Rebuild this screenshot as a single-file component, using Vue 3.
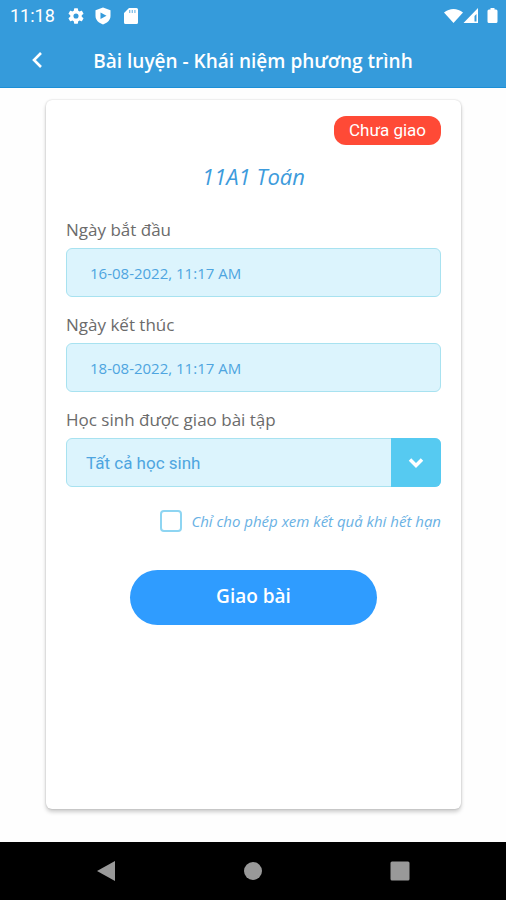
<script setup>
import { ref } from 'vue'

const startDate = ref('16-08-2022, 11:17 AM')
const endDate = ref('18-08-2022, 11:17 AM')
const students = ref('all')
const hideUntilExpired = ref(false)
</script>

<template>
  <div class="screen">
    <header class="top">
      <div class="status">
        <span class="clock">11:18</span>
        <svg class="gear" viewBox="2 2 20 20" width="16" height="16" aria-hidden="true">
          <path fill="#fff" d="M19.14 12.94c.04-.3.06-.61.06-.94 0-.32-.02-.64-.07-.94l2.03-1.58a.49.49 0 0 0 .12-.61l-1.92-3.32a.49.49 0 0 0-.59-.22l-2.39.96a7 7 0 0 0-1.62-.94l-.36-2.54A.48.48 0 0 0 13.92 2.400h-3.840a.48.48 0 0 0-.47.41l-.36 2.540a7.200 7.200 0 0 0-1.620.94l-2.390-.96a.48.48 0 0 0-.59.22L2.740 8.870a.47.47 0 0 0 .12.61l2.030 1.580c-.05.3-.09.63-.09.94s.02.64.07.94l-2.030 1.580a.49.49 0 0 0-.12.61l1.920 3.320c.12.22.37.29.59.22l2.390-.96c.5.38 1.030.7 1.620.94l.36 2.540c.05.24.24.41.48.41h3.840c.24 0 .44-.17.47-.41l.36-2.540a7 7 0 0 0 1.620-.94l2.390.96c.22.08.47 0 .59-.22l1.920-3.320a.47.47 0 0 0-.12-.61zM12 15.200a3.200 3.200 0 1 1 0-6.400 3.200 3.200 0 0 1 0 6.400z" />
        </svg>
        <svg class="shield" viewBox="0 0 16 18" width="16" height="18" aria-hidden="true">
          <path fill="#fff" d="M8 .5l7.500 2.800V9c0 4-3.200 7-7.500 8.500C3.700 16 .5 13 .5 9V3.300z" />
          <path fill="#359bdb" d="M5.500 5.500v6.400L11.500 8.700z" />
        </svg>
        <svg class="card-icon" viewBox="0 0 14 16" width="14" height="16" aria-hidden="true">
          <path fill="#fff" d="M5 0h7.500A1.500 1.500 0 0 1 14 1.500v13a1.500 1.500 0 0 1-1.500 1.500h-11A1.500 1.500 0 0 1 0 14.500V5z" />
          <path stroke="#7fbfe9" stroke-width="1.300" d="M5.700 2v3M8.300 2v3M10.900 2v3" />
        </svg>
        <svg class="signals" viewBox="0 0 56 18" width="56" height="18" aria-hidden="true">
          <path fill="#fff" d="M0 5.500C5.500.8 13.500.8 19 5.500L9.500 16z" />
          <path fill="#fff" fill-rule="evenodd" d="M34 1v15H19.500zM32.500 7v7.500h-2V9z" />
          <path fill="#fff" d="M46.500 1h4v1.500H52a1.500 1.500 0 0 1 1.500 1.500v10.500A1.500 1.500 0 0 1 52 16h-7a1.500 1.500 0 0 1-1.500-1.500V4A1.500 1.500 0 0 1 45 2.500h1.500z" />
        </svg>
      </div>
      <div class="bar">
        <button class="back" type="button" aria-label="Quay lại">
          <svg viewBox="0 0 12 18" width="12" height="18" aria-hidden="true">
            <path d="M10 2L3 9l7 7" fill="none" stroke="#fff" stroke-width="2.600" />
          </svg>
        </button>
        <h1>Bài luyện - Khái niệm phương trình</h1>
      </div>
    </header>

    <main>
      <form class="card" @submit.prevent>
        <span class="badge">Chưa giao</span>
        <h2>11A1 Toán</h2>

        <label for="start">Ngày bắt đầu</label>
        <input id="start" v-model="startDate" class="field" type="text" />

        <label for="end">Ngày kết thúc</label>
        <input id="end" v-model="endDate" class="field" type="text" />

        <label for="students">Học sinh được giao bài tập</label>
        <div class="picker">
          <select id="students" v-model="students" class="field">
            <option value="all">Tất cả học sinh</option>
          </select>
          <span class="arrow">
            <svg viewBox="0 0 16 12" width="16" height="12" aria-hidden="true">
              <path d="M2 2.500l6 6 6-6" fill="none" stroke="#fff" stroke-width="3.500" />
            </svg>
          </span>
        </div>

        <div class="option">
          <input id="hide" v-model="hideUntilExpired" type="checkbox" />
          <label for="hide">Chỉ cho phép xem kết quả khi hết hạn</label>
        </div>

        <button class="submit" type="submit">Giao bài</button>
      </form>
    </main>

    <nav>
      <button type="button" aria-label="Trở về">
        <svg viewBox="0 0 20 22" width="20" height="22"><path fill="#999" d="M19 1v20L1 11z" /></svg>
      </button>
      <button type="button" aria-label="Màn hình chính">
        <svg viewBox="0 0 20 20" width="20" height="20"><circle cx="10" cy="10" r="9" fill="#999" /></svg>
      </button>
      <button type="button" aria-label="Ứng dụng gần đây">
        <svg viewBox="0 0 20 20" width="20" height="20"><rect width="19" height="19" x=".5" y=".5" rx="1.500" fill="#999" /></svg>
      </button>
    </nav>
  </div>
</template>

<style>
body {
  margin: 0;
  background: #fefefe;
}
</style>

<style scoped>
.screen {
  display: flex;
  flex-direction: column;
  min-height: 100vh;
  font-family: "Open Sans", "Noto Sans", sans-serif;
  color: #6b6b6b;
}

.screen * {
  box-sizing: border-box;
}

button {
  padding: 0;
  border: 0;
  background: none;
  font-family: inherit;
  cursor: pointer;
}

svg {
  display: block;
}

.top {
  background: #359bdb;
  color: #fff;
  box-shadow: inset 0 -1px #1c8fd6;
}

.status {
  display: flex;
  align-items: center;
  height: 32px;
  padding: 0 6px 0 10px;
}

.clock {
  font: 18px/32px Roboto, sans-serif;
  margin-right: 13px;
}

.shield {
  margin-left: 11px;
}

.card-icon {
  margin-left: 13px;
}

.signals {
  margin-left: auto;
}

.bar {
  display: grid;
  grid-template-columns: 73px 1fr 73px;
  align-items: center;
  height: 56px;
}

.back {
  display: grid;
  place-items: center;
  height: 48px;
}

h1 {
  margin: 0;
  padding-top: 2px;
  font-size: 19px;
  font-weight: 600;
  line-height: 28px;
  text-align: center;
  white-space: nowrap;
}

main {
  display: flex;
  flex: 1;
  padding: 12px 45px 33px 46px;
}

.card {
  display: flex;
  flex: 1;
  flex-direction: column;
  min-width: 0;
  padding: 16px 20px;
  border-radius: 6px;
  background: #fff;
  box-shadow: 0 0 2px rgba(0, 0, 0, 0.2), 0 3px 4px rgba(0, 0, 0, 0.2);
}

.badge {
  align-self: flex-end;
  padding: 0 15px;
  border-radius: 12px;
  background: #ff4a36;
  color: #fff;
  font: 17px/29px Roboto, sans-serif;
}

h2 {
  margin: 16px 0 27px;
  color: #3d9bdc;
  font-size: 22px;
  font-style: italic;
  font-weight: 400;
  line-height: 30px;
  text-align: center;
}

.card > label {
  margin-bottom: 6px;
  font-size: 17px;
  font-weight: 500;
  line-height: 24px;
}

.field {
  width: 100%;
  height: 49px;
  margin: 0 0 16px;
  padding: 0 23px;
  border: 1px solid #a8e2f0;
  border-radius: 6px;
  background: #dcf4fd;
  color: #4ea5e0;
  font-family: inherit;
  font-size: 15px;
}

.picker {
  display: grid;
  grid-template-columns: 1fr 50px;
}

.picker .field {
  grid-area: 1 / 1 / 2 / 3;
  margin: 0;
  padding: 0 60px 0 19px;
  appearance: none;
  font-family: Roboto, sans-serif;
  font-size: 17px;
}

.arrow {
  display: grid;
  grid-area: 1 / 2;
  place-items: center;
  border-radius: 0 6px 6px 0;
  background: #56caf1;
  pointer-events: none;
}

.option {
  display: flex;
  align-items: center;
  justify-content: flex-end;
  gap: 9px;
  margin-top: 22px;
  color: #69b1e4;
  font-size: 15px;
  font-style: italic;
  line-height: 24px;
  white-space: nowrap;
}

.option input {
  width: 22px;
  height: 22px;
  margin: 0;
  border: 2px solid #8ed5f2;
  border-radius: 4px;
  appearance: none;
}

.option input:checked {
  background: #56caf1;
}

.submit {
  align-self: center;
  width: 66%;
  height: 55px;
  margin-top: 37px;
  padding-bottom: 4px;
  border-radius: 28px;
  background: #2f9cff;
  color: #fff;
  font-size: 19px;
  font-weight: 600;
}

nav {
  display: grid;
  grid-template-columns: repeat(3, 1fr);
  height: 58px;
  padding: 0 33px;
  background: #000;
}

nav button {
  display: grid;
  place-items: center;
}
</style>
